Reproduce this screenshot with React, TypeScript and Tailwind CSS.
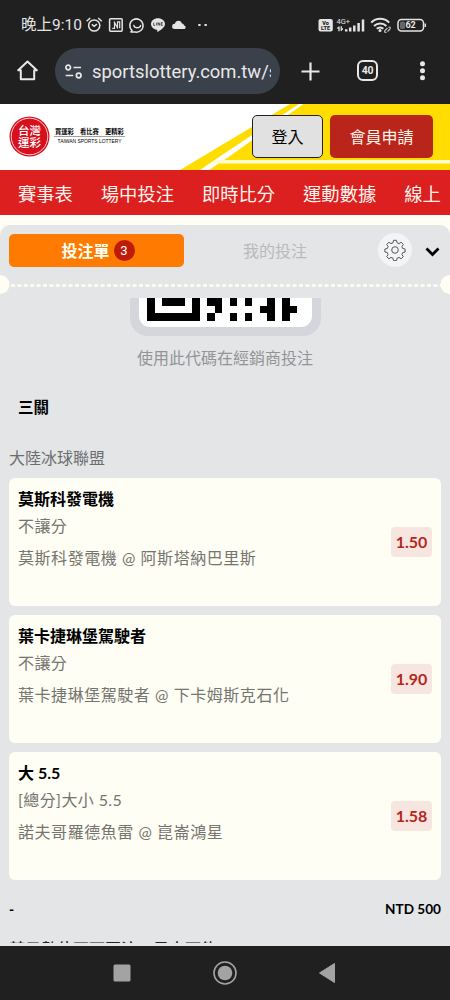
const bets = [
  { pick: "莫斯科發電機", market: "不讓分", match: "莫斯科發電機 @ 阿斯塔納巴里斯", odds: "1.50" },
  { pick: "葉卡捷琳堡駕駛者", market: "不讓分", match: "葉卡捷琳堡駕駛者 @ 下卡姆斯克石化", odds: "1.90" },
  { pick: "大 5.5", market: "[總分]大小 5.5", match: "諾夫哥羅德魚雷 @ 崑崙鴻星", odds: "1.58" },
];

const navItems = ["賽事表", "場中投注", "即時比分", "運動數據", "線上投注"];

// Last three module rows of the QR code
const qrRows = [
  "10111010110101001010",
  "10000010010000011011",
  "11111110100101001010",
];

const StatusBar = () => (
  <div className="flex h-[50px] items-center pl-[21px] text-[#e4e4e4]">
    <span className="w-[65px] font-['Roboto','Noto_Sans_CJK_TC',sans-serif] text-[15.5px] leading-5 whitespace-nowrap">
      晚上9:10
    </span>
    <svg className="h-[18px] w-[128px]" viewBox="85 16 128 18" fill="none" stroke="#e4e4e4" strokeWidth="1.5">
      <circle cx="93.2" cy="25.5" r="5.6" />
      <path d="M85.6 21.3l3.6-3.3M100.8 21.3l-3.6-3.3M90.8 24.4l2.4 2 2.7-2.2" />
      <rect x="108.6" y="18.7" width="12.6" height="12.6" rx="1" />
      <path d="M111.3 28.300h2.200v-6.600M113 21.500l3.800 7M116.500 28.500v-6.700h2.200v6.500" strokeWidth="1.2" />
      <path d="M131 30.4a6.6 6.6 0 1 1 3.2 1.6h-4.3z" strokeLinejoin="round" />
      <path d="M132.9 25.6c.7 2.8 6 2.8 6.7 0" strokeLinecap="round" />
      <path d="M157 18.2c-4 0-7 2.6-7 5.8 0 2.9 2.5 5.1 5.8 5.7.7.2.5 1.1.5 2.3 3-1.4 7.7-4.7 7.7-8 0-3.2-3.1-5.8-7-5.8z" fill="#e4e4e4" stroke="none" />
      <path d="M152.7 22.6v2.8h1.5M155.6 22.6v2.8M157 25.4v-2.8l1.7 2.8v-2.8M161.8 22.6h-1.6v2.8h1.6M160.2 24h1.4" stroke="#222" strokeWidth=".7" />
      <path d="M173.5 29a2.6 2.6 0 0 1 .4-5.2c.6-3.7 5.7-4.2 6.8-.6a3 3 0 0 1 2.5 2.2c2 .3 2 3.4-.3 3.6z" fill="#e4e4e4" stroke="none" />
      <path d="M197.3 25h2.3M203.5 25h2.3" strokeWidth="2" />
    </svg>
    <svg className="ml-[103px] h-[18px] w-[112px] font-['Roboto',sans-serif]" viewBox="317 16 112 18" fill="none" stroke="#e4e4e4">
      <rect x="318.5" y="19" width="14.3" height="12.5" rx="2" fill="#e4e4e4" stroke="none" />
      <text x="325.6" y="24.8" fontSize="5.5" fontWeight="900" textAnchor="middle" fill="#222" stroke="none">Vo</text>
      <text x="325.6" y="30.4" fontSize="5.5" fontWeight="900" textAnchor="middle" fill="#222" stroke="none">LTE</text>
      <text x="336.5" y="23.8" fontSize="7.5" fill="#e4e4e4" stroke="none">4G+</text>
      <path d="M339 26.5v4.8M337.3 28h1.7M341.3 31v-4.8M341.3 29h1.7" strokeWidth="1.3" />
      <path d="M346.2 31.5v-2.3M350.2 31.5v-4M354.3 31.5v-6M358.6 31.5v-8.5M363 31.5v-12" strokeWidth="2.5" />
      <path d="M371.2 22.6c5-5 13-5 18 0M374 26c3.6-3.4 9-3.4 12.4 0M376.8 28.8c1.9-1.9 4.7-1.9 6.5 0" strokeWidth="2" />
      <circle cx="380" cy="30.5" r="1.5" fill="#e4e4e4" stroke="none" />
      <path d="M385 30.5l2.5-2.5M387.5 31.5l2.5-2.5c1-1.5-.5-2.5-1.5-1.5M387 28.5l-2.2 2.2c-.8 1.2.6 2.3 1.6 1.3" stroke="#bbb" strokeWidth="1.2" />
      <rect x="398" y="19.5" width="25.5" height="11.5" rx="3.5" strokeWidth="1.5" />
      <rect x="400" y="21.5" width="5" height="7.5" rx="1.5" fill="#666" stroke="none" />
      <path d="M425.3 23.5v3.5" strokeWidth="1.5" />
      <text x="410.6" y="28.4" fontSize="9" fontWeight="700" textAnchor="middle" fill="#e8e8e8" stroke="none">62</text>
    </svg>
  </div>
);

const AddressBar = () => (
  <div className="flex h-[54px] items-start pl-[17px] text-[#e8e8e8]">
    <svg className="mt-[10px] size-[21px]" viewBox="0 0 21 21" fill="none" stroke="currentColor" strokeWidth="2" strokeLinejoin="round">
      <path d="M1.2 10.3L10.5 1.5l9.3 8.8h-2.6v9H3.8v-9z" />
    </svg>
    <div className="-mt-[2px] ml-[17px] flex h-[46px] w-[225px] items-center rounded-full bg-[#3b414b] pl-[10px]">
      <svg className="h-[15px] w-[18px]" viewBox="0 0 18 15" fill="none" stroke="currentColor" strokeWidth="1.7">
        <circle cx="3.2" cy="3.5" r="2.3" />
        <circle cx="13.7" cy="11.5" r="2.3" />
        <path d="M8.5 3.5H16M.7 11.5h7.5" />
      </svg>
      <div className="mt-[2px] ml-[9px] w-[179px] overflow-hidden font-['Roboto',sans-serif] text-[18.4px] whitespace-nowrap">
        sportslottery.com.tw/s
      </div>
    </div>
    <svg className="mt-[12px] ml-[21px] size-[19px]" viewBox="0 0 19 19" stroke="currentColor" strokeWidth="2.2">
      <path d="M9.5 .5v18M.5 9.5h18" />
    </svg>
    <div className="mt-[10px] ml-[37px] flex size-[21px] items-center justify-center rounded-[6px] border-2 border-[#e8e8e8] font-['Roboto',sans-serif] text-[10.5px] font-bold tracking-tight">
      40
    </div>
    <svg className="mt-[11px] ml-[31px] h-[20px] w-[28px]" viewBox="0 0 28 20" fill="currentColor">
      <circle cx="13.5" cy="2.8" r="2.5" />
      <circle cx="13.5" cy="9.8" r="2.5" />
      <circle cx="13.5" cy="16.8" r="2.5" />
    </svg>
  </div>
);

const SiteHeader = () => (
  <header className="relative flex h-[66px] items-start bg-white">
    {/* yellow court lines behind the buttons */}
    <svg className="absolute inset-0 h-[66px] w-[450px]" viewBox="0 0 450 66">
      <path d="M180 66L290 0H450V66z" fill="#ffdd00" />
      <path d="M200 66L222 51 299 0h4.5L230 52l-21 14z" fill="#fff" />
      <path d="M216 56h234v3.5H211z" fill="#fffbd0" />
    </svg>
    <svg className="relative mt-3 ml-[9px] size-[41px] font-['Noto_Sans_CJK_TC',sans-serif]" viewBox="0 0 41 41">
      <circle cx="20.5" cy="20.5" r="20" fill="#d8101d" />
      <circle cx="20.5" cy="20.5" r="18.3" fill="none" stroke="#fff" strokeWidth=".8" />
      <text x="20.5" y="19.3" fontSize="11.5" fontWeight="500" fill="#fff" textAnchor="middle">台灣</text>
      <text x="20.5" y="31.3" fontSize="11.5" fontWeight="500" fill="#fff" textAnchor="middle">運彩</text>
    </svg>
    <svg className="relative mt-[22px] ml-[4px] h-[20px] w-[72px]" viewBox="0 0 72 20">
      <g className="font-['Noto_Sans_CJK_TC',sans-serif]" fontSize="6.3" fontWeight="700">
        <text x="1" y="7.5">買運彩</text>
        <text x="26" y="7.5">看比賽</text>
        <text x="51" y="7.5">更精彩</text>
      </g>
      <path d="M0 10.5h71" stroke="#777" strokeWidth=".7" />
      <text x="3.5" y="17.2" fontSize="4.8" textLength="64" lengthAdjust="spacingAndGlyphs" className="font-['Liberation_Sans',sans-serif]">
        TAIWAN SPORTS LOTTERY
      </text>
    </svg>
    <button className="relative mt-[11px] ml-[126px] h-[43px] w-[71px] rounded-[5px] border border-[#222] bg-[#e1e1e1] text-[16px] text-black">
      登入
    </button>
    <button className="relative mt-[11px] ml-[7px] h-[43px] w-[103px] rounded-[5px] bg-[#b9241b] text-[16px] text-[#fff5e8]">
      會員申請
    </button>
  </header>
);

const SlipHeader = () => (
  <div className="flex h-[60px] items-start pt-[9px] pl-[9px]">
    <div className="flex h-[33px] w-[175px] items-center justify-center gap-[4px] rounded-[5px] bg-[#ff7a00] pl-[3px] text-[16px] font-bold text-[#fffff3]">
      投注單
      <span className="flex size-[21px] items-center justify-center rounded-full bg-[#bf1b0b] font-['Roboto','Noto_Sans_CJK_TC',sans-serif] text-[13px] font-normal">
        3
      </span>
    </div>
    <div className="flex h-[33px] w-[182px] items-center justify-center text-[16px] text-[#b9babb]">我的投注</div>
    <div className="-mt-px ml-[12px] flex size-[34px] items-center justify-center rounded-full bg-[#f3f4f6]">
      <svg className="size-[22px]" viewBox="0 0 22 22" fill="none" stroke="#55585b" strokeWidth="1" strokeLinejoin="round">
        <circle cx="11" cy="11" r="3.3" />
        <path d="M9.5 1.3h3l.6 2.5 1.9.8 2.2-1.4 2.1 2.2-1.4 2.1.8 2 2.4.5v3l-2.4.6-.8 2 1.4 2.1-2.1 2.1-2.2-1.4-1.9.8-.6 2.5h-3l-.5-2.5-2-.8-2.1 1.4-2.2-2.1 1.4-2.1-.8-2-2.4-.6v-3l2.4-.5.8-2-1.4-2.1 2.2-2.2L7 4.6l2-.8z" />
      </svg>
    </div>
    <svg className="mt-[13px] ml-[13px] h-[10px] w-[15px]" viewBox="0 0 15 10" fill="none" stroke="#000" strokeWidth="2.8">
      <path d="M1.5 1.5l6 6 6-6" />
    </svg>
  </div>
);

const TicketDivider = () => (
  <svg className="h-[20px] w-full shrink-0" viewBox="0 0 450 20">
    <path d="M11 10.5h430" stroke="#fffef5" strokeWidth="2.6" strokeDasharray="4 2.4" />
    <circle cx="0" cy="9.5" r="9.5" fill="#fffef5" />
    <circle cx="450" cy="9.5" r="9.5" fill="#fffef5" />
  </svg>
);

const QrCode = () => (
  <div className="mx-auto h-[38px] w-[191px] rounded-b-[18px] bg-[#d5d6dc] px-[9px]">
    <div className="h-[29px] rounded-b-[11px] bg-white">
      <svg className="ml-[8px] h-[23px] w-[158px]" viewBox="0 0 158 23" shapeRendering="crispEdges">
        {qrRows.map((row, y) =>
          row.split("").map((bit, x) =>
            bit === "1" ? <rect key={`${x}-${y}`} x={x * 7.5} y={y * 7.55} width="7.6" height="7.7" /> : null,
          ),
        )}
      </svg>
    </div>
  </div>
);

const BetCard = ({ pick, market, match, odds }: (typeof bets)[number]) => (
  <div className="relative h-[128px] rounded-[6px] bg-[#fffef5] px-[9px] pt-[8px]">
    <p className="text-[16px] leading-[26px] font-bold text-black">{pick}</p>
    <p className="text-[16px] leading-[28px] tracking-[0.4px] text-[#75756f]">{market}</p>
    <p className="mt-[4px] text-[16px] leading-[28px] tracking-[0.55px] text-[#75756f]">{match}</p>
    <span className="absolute top-[49px] right-[9px] flex h-[30px] w-[41px] items-center justify-center rounded-[4px] bg-[#f7e6e0] text-[16px] font-bold text-[#b3261c]">
      {odds}
    </span>
  </div>
);

const SystemNav = () => (
  <footer className="h-[54px] bg-[#202020]">
    <svg className="h-[54px] w-[450px]" viewBox="0 0 450 54">
      <rect x="113.5" y="18.5" width="17" height="17" rx="1.5" fill="#a3a3a3" />
      <circle cx="225" cy="27" r="11" fill="none" stroke="#a3a3a3" strokeWidth="1.6" />
      <circle cx="225" cy="27" r="7.3" fill="#a3a3a3" />
      <path d="M319.5 27l15-9.5v19z" fill="#a3a3a3" stroke="#a3a3a3" strokeLinejoin="round" />
    </svg>
  </footer>
);

export default function App() {
  return (
    <div className="flex h-[1000px] w-[450px] flex-col overflow-hidden bg-[#fffef5] font-['Lato','Noto_Sans_CJK_TC',sans-serif]">
      <div className="h-[104px] shrink-0 bg-[#202020]">
        <StatusBar />
        <AddressBar />
      </div>
      <SiteHeader />
      <nav className="h-[45px] bg-[#dc1f1f] pt-[5px] pr-[9px] pl-[18px]">
        <div className="flex h-full items-center gap-[28px] overflow-hidden text-[18.3px] whitespace-nowrap text-[#fff3ec]">
          {navItems.map((item) => (
            <span key={item} className="shrink-0">
              {item}
            </span>
          ))}
        </div>
      </nav>
      <main className="mt-[10px] flex h-[721px] flex-col overflow-hidden rounded-t-[10px] bg-[#e4e5e7]">
        <div className="h-[50px] shrink-0">
          <SlipHeader />
        </div>
        <TicketDivider />
        <div className="mt-[3px] h-[645px] shrink-0 overflow-hidden">
          <QrCode />
          <p className="mt-[9px] text-center text-[16px] leading-[26px] text-[#939496]">使用此代碼在經銷商投注</p>
          <h2 className="mt-[23px] pl-[18px] text-[15.5px] leading-[26px] font-bold text-black">三關</h2>
          <p className="mt-[25px] pl-[9px] text-[16px] leading-[26px] text-[#6c6d6f]">大陸冰球聯盟</p>
          <div className="mt-[7px] flex flex-col gap-[9px] px-[9px]">
            {bets.map((bet) => (
              <BetCard key={bet.pick} {...bet} />
            ))}
          </div>
          <div className="mt-[16px] flex h-[26px] items-center justify-between px-[9px] text-[13.6px] font-bold text-black">
            <span className="font-black">-</span>
            <span>NTD 500</span>
          </div>
          <p className="mt-[14px] pl-[9px] text-[16px] leading-[26px] font-medium whitespace-nowrap text-[#222]">
            若只數位不可互注，最大可能
          </p>
        </div>
      </main>
      <SystemNav />
    </div>
  );
}
